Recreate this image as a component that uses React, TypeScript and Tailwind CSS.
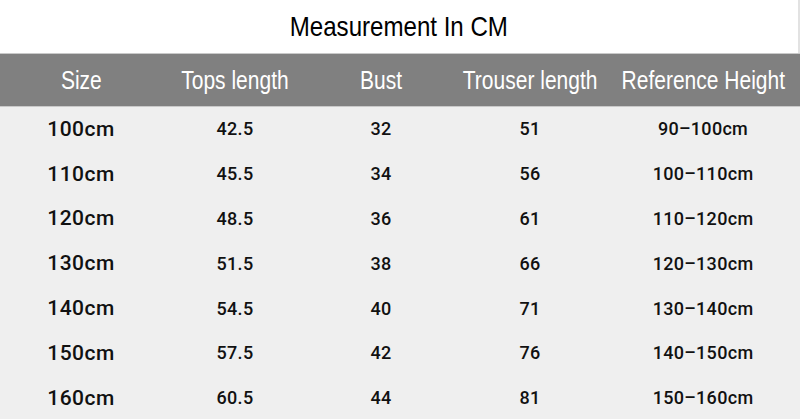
const COLS = ["Size", "Tops length", "Bust", "Trouser length", "Reference Height"];

const ROWS = [
  ["100cm", "42.5", "32", "51", "90–100cm"],
  ["110cm", "45.5", "34", "56", "100–110cm"],
  ["120cm", "48.5", "36", "61", "110–120cm"],
  ["130cm", "51.5", "38", "66", "120–130cm"],
  ["140cm", "54.5", "40", "71", "130–140cm"],
  ["150cm", "57.5", "42", "76", "140–150cm"],
  ["160cm", "60.5", "44", "81", "150–160cm"],
];

const GRID = "grid grid-cols-[162px_146px_146px_152px_194px]";

export default function App() {
  return (
    <div className="h-[419px] w-[800px] overflow-hidden bg-[#efefef] font-['Liberation_Sans',Arial,sans-serif]">
      {/* title */}
      <div className="flex h-[53px] items-center justify-center border-r-2 border-[#e2e2e2] bg-white">
        <h1 className="inline-block scale-x-[0.86] whitespace-nowrap text-[28px] leading-none text-black">
          Measurement In CM
        </h1>
      </div>

      {/* header row */}
      <div className={`${GRID} h-[54px] items-center border-y border-[#c9c9c9] bg-[#808080]`}>
        {COLS.map((c) => (
          <div key={c} className="flex justify-center">
            <span className="inline-block scale-x-[0.84] whitespace-nowrap text-[25px] leading-none text-white">
              {c}
            </span>
          </div>
        ))}
      </div>

      {/* body */}
      <div className="font-['Roboto','Liberation_Sans',Arial,sans-serif] font-medium text-[#111]">
        {ROWS.map((r) => (
          <div key={r[0]} className={`${GRID} h-[44.8px] items-center`}>
            {r.map((v, i) => (
              <div
                key={i}
                className={
                  i === 0
                    ? "text-center text-[21px] leading-none tracking-[0.5px]"
                    : "text-center text-[18px] leading-none tracking-[0.3px]"
                }
              >
                {v}
              </div>
            ))}
          </div>
        ))}
      </div>
    </div>
  );
}
